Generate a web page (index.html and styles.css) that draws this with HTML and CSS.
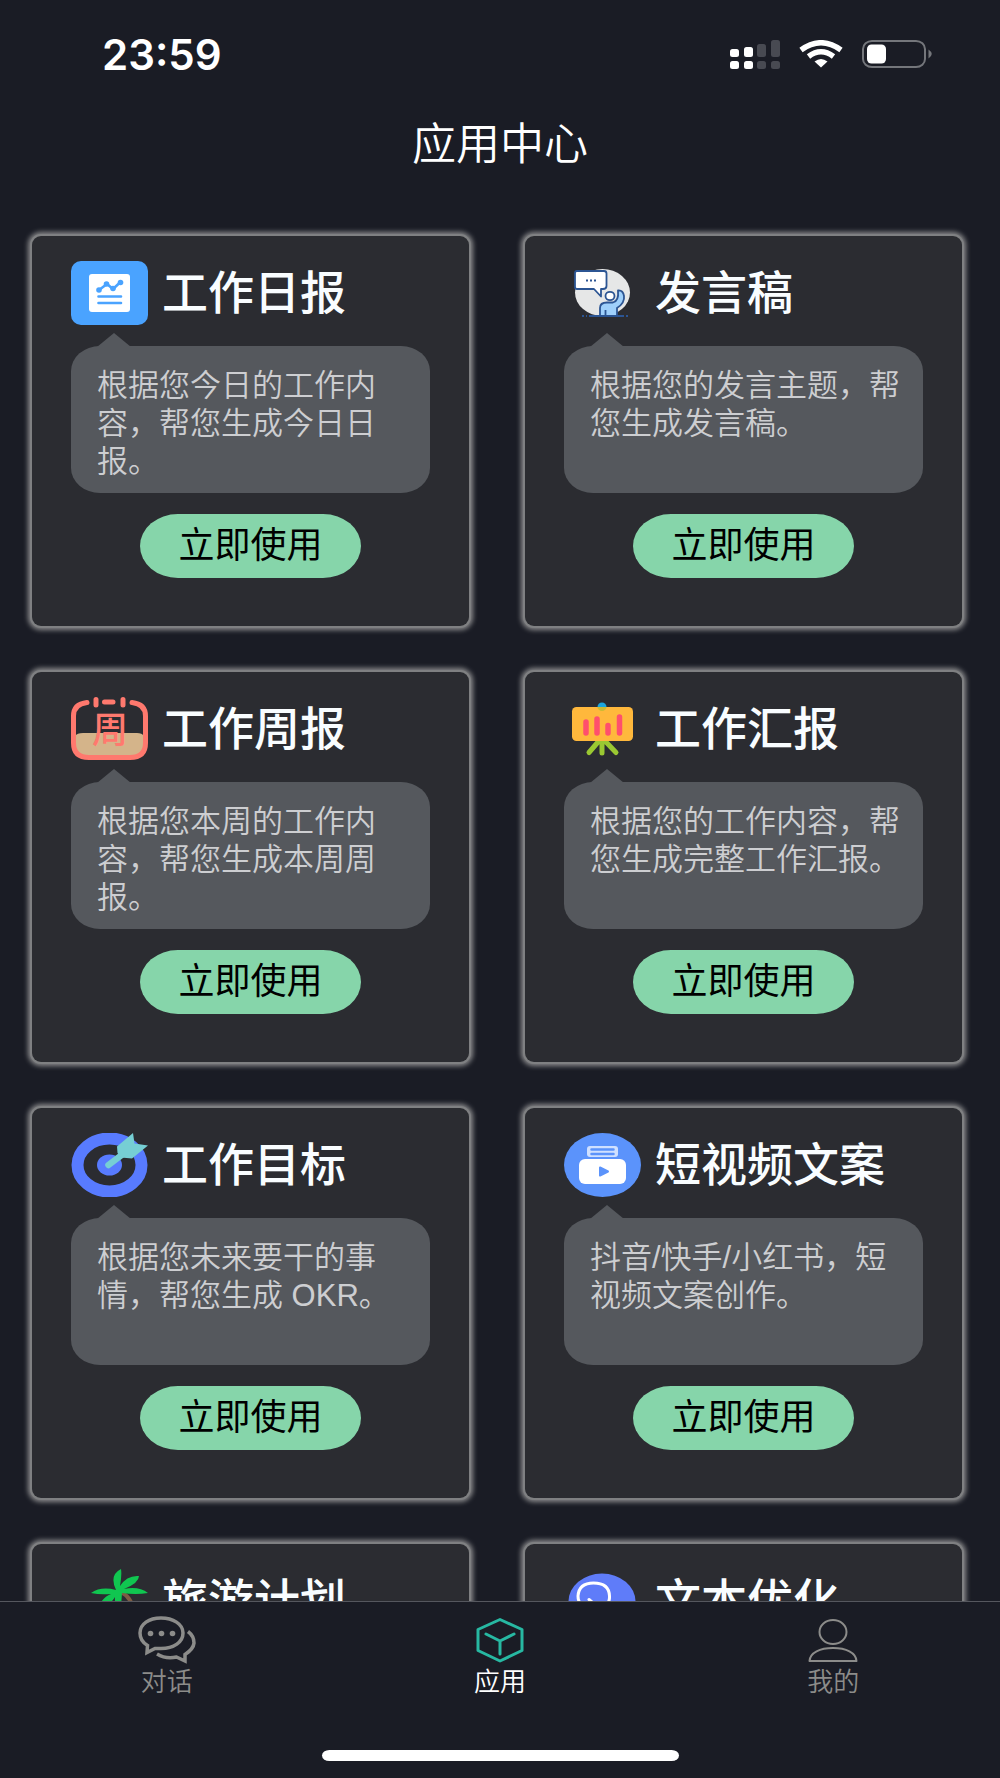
FILE: index.html
```
<!DOCTYPE html>
<html lang="zh-CN">
<head>
  <meta charset="UTF-8" />
  <meta name="viewport" content="width=device-width, initial-scale=1" />
  <title>应用中心</title>
  <link rel="stylesheet" href="styles.css">
</head>
<body>
  <div class="status-bar">
    <span class="time">23:59</span>
    <div class="status-icons">
      <svg width="50" height="29" viewBox="0 0 50 29" fill="#fff">
        <rect x="0" y="9" width="9" height="8" rx="2.5" />
        <rect x="14" y="7" width="9" height="10" rx="2.5" />
        <rect x="0" y="21" width="9" height="8" rx="2.5" />
        <rect x="14" y="21" width="9" height="8" rx="2.5" />
        <g fill="#484a52">
          <rect x="27" y="4" width="9" height="13" rx="2.5" />
          <rect x="41" y="0" width="9" height="17" rx="2.5" />
          <rect x="27" y="21" width="9" height="8" rx="2.5" />
          <rect x="41" y="21" width="9" height="8" rx="2.5" />
        </g>
      </svg>
      <svg width="44" height="28" viewBox="0 0 44 28" fill="none" stroke="#fff" stroke-width="5.5">
        <path d="M2 10 Q22 -4.5 42 10" />
        <path d="M9.500 16.500 Q22 7 34.500 16.500" />
        <path d="M15.500 21.500 Q22 16.500 28.500 21.500 L22 27.500Z" fill="#fff" stroke="none" />
      </svg>
      <svg width="70" height="28" viewBox="0 0 70 28">
        <rect x="1" y="1" width="62" height="26" rx="9" ry="8" fill="none" stroke="#74767b" stroke-width="2" />
        <rect x="5" y="4.500" width="19" height="19" rx="4.500" fill="#fff" />
        <path d="M66.500 9.500 Q73 14 66.500 18.500Z" fill="#74767b" />
      </svg>
    </div>
  </div>

  <header>
    <h1>应用中心</h1>
  </header>

  <main>
    <div class="app-list">
      <section class="card">
        <div class="card-head">
          <svg class="icon" viewBox="0 0 77 64">
            <rect width="77" height="64" rx="10" fill="#4aa3ff" />
            <rect x="18" y="13" width="41" height="38" rx="3" fill="#fff" />
            <g fill="none" stroke="#4aa3ff" stroke-width="2.600" stroke-linecap="round" stroke-linejoin="round">
              <path d="M28 29 L36 23 L42 28 L49 21.500" />
              <path d="M27.500 35.500 H50 M27.500 42 H50" />
            </g>
            <g fill="#4aa3ff">
              <circle cx="28" cy="29" r="2.800" /><circle cx="35.500" cy="23" r="2.800" />
              <circle cx="42" cy="27.500" r="2.800" /><circle cx="49.500" cy="21.500" r="2.800" />
            </g>
          </svg>
          <h2>工作日报</h2>
        </div>
        <p class="desc">根据您今日的工作内容，帮您生成今日日报。</p>
        <button type="button">立即使用</button>
      </section>

      <section class="card">
        <div class="card-head">
          <svg class="icon" viewBox="0 0 77 64">
            <ellipse cx="38.500" cy="31.500" rx="27.500" ry="23.500" fill="#e6e7e7" />
            <g stroke="#2c5593" stroke-width="1.800" stroke-linejoin="round">
              <path d="M13 10 H40 Q42.500 10 42.500 12.500 V25 Q42.500 28 39 28 H37 V35.500 L30 28 H13 Q11 28 11 26 V12 Q11 10 13 10Z" fill="#fff" />
              <ellipse cx="46" cy="35" rx="4.500" ry="4.200" fill="#fff" />
              <path d="M36 55 V47 Q36 41.500 43 41.500 H49 Q55 40 54 29.500 Q59 29 60 35 Q61 42 53 47 V55Z" fill="#9fd0fb" />
              <path d="M41.500 49 V55 M25 55 H60" />
              <path d="M18 55 h5 M62 55 h4 M22 19.500 h10" stroke-dasharray="2 2" />
            </g>
          </svg>
          <h2>发言稿</h2>
        </div>
        <p class="desc">根据您的发言主题，帮您生成发言稿。</p>
        <button type="button">立即使用</button>
      </section>

      <section class="card">
        <div class="card-head">
          <svg class="icon" viewBox="0 0 77 64">
            <path d="M4 39 Q6 36 12 36 H66 Q71 36 73 39 V47 Q73 60 60 60 H18 Q4 60 4 47Z" fill="#d4b48a" />
            <g fill="none" stroke="#ff796e" stroke-width="5" stroke-linecap="round">
              <path d="M16 5.500 Q2.500 7 2.500 19 V46 Q2.500 60.500 18 60.500 H59 Q74.500 60.500 74.500 46 V19 Q74.500 7 61 5.500" />
              <path d="M33.500 5 H42 M25 2.500 V8 M52 2.500 V8" />
            </g>
            <text class="icon-text" x="39" y="46">周</text>
          </svg>
          <h2>工作周报</h2>
        </div>
        <p class="desc">根据您本周的工作内容，帮您生成本周周报。</p>
        <button type="button">立即使用</button>
      </section>

      <section class="card">
        <div class="card-head">
          <svg class="icon" viewBox="0 0 77 64">
            <path d="M38 44 V56 M34 45 L25 55.500 M42 45 L52 55.500" stroke="#9ac832" stroke-width="5" stroke-linecap="round" />
            <circle cx="38" cy="10" r="4.500" fill="#1ca6dd" />
            <rect x="8" y="10" width="61" height="34" rx="4.500" fill="#ffb83c" />
            <path d="M33.500 10 A4.500 4 0 0 0 42.500 10Z" fill="#c9bb35" />
            <path d="M22 25 V36 M33 22 V36 M44 28.500 V36 M55.500 20 V36" stroke="#ff4f6d" stroke-width="5.500" stroke-linecap="round" />
          </svg>
          <h2>工作汇报</h2>
        </div>
        <p class="desc">根据您的工作内容，帮您生成完整工作汇报。</p>
        <button type="button">立即使用</button>
      </section>

      <section class="card">
        <div class="card-head">
          <svg class="icon" viewBox="0 0 77 64">
            <ellipse cx="38.500" cy="32" rx="32" ry="26.500" fill="none" stroke="#587bff" stroke-width="12" />
            <ellipse cx="38.500" cy="32" rx="12.500" ry="10.500" fill="#587bff" />
            <path d="M37.500 32 L52 21" stroke="#76cfd4" stroke-width="6.500" stroke-linecap="round" />
            <path d="M46 13.500 L62 0 L63.500 10.500 L77 12.500 L61 25.500 L50 24.500 L46.500 20Z" fill="#76cfd4" />
          </svg>
          <h2>工作目标</h2>
        </div>
        <p class="desc">根据您未来要干的事情，帮您生成 OKR。</p>
        <button type="button">立即使用</button>
      </section>

      <section class="card">
        <div class="card-head">
          <svg class="icon" viewBox="0 0 77 64">
            <ellipse cx="38.500" cy="32" rx="38.500" ry="32" fill="#5b93fb" />
            <rect x="23" y="13" width="31" height="11" rx="3" fill="#cfe0ff" />
            <path d="M27.500 16.500 H49.500 M27.500 21 H49.500" stroke="#5b93fb" stroke-width="2.500" stroke-linecap="round" />
            <rect x="15" y="26" width="47" height="25" rx="6" fill="#fff" />
            <path d="M36 34.500 L44 38.500 L36 42.500Z" fill="#5b93fb" stroke="#5b93fb" stroke-width="2" stroke-linejoin="round" />
          </svg>
          <h2>短视频文案</h2>
        </div>
        <p class="desc">抖音/快手/小红书，短视频文案创作。</p>
        <button type="button">立即使用</button>
      </section>

      <section class="card">
        <div class="card-head">
          <svg class="icon" viewBox="0 0 77 64">
            <path d="M50 23 Q60 28 62 40 L62 62" fill="none" stroke="#7d5c44" stroke-width="4" />
            <path d="M45 21 Q38 6 50 0 Q51 6 49 17 Q56 6 68 7 Q68 14 53 20 Q68 17 77 24 Q65 26 51 24 L50 38 Q43 37 44 28 Q38 38 28 37 Q32 28 40 25 Q29 26 20 24 Q30 17 45 21Z" fill="#10c650" />
          </svg>
          <h2>旅游计划</h2>
        </div>
      </section>

      <section class="card">
        <div class="card-head">
          <svg class="icon" viewBox="0 0 77 64">
            <ellipse cx="38" cy="32.500" rx="33.500" ry="28" fill="#5f7cf9" />
            <path d="M20 38 Q14 34 14 27 Q15 14 29.500 14 Q45 14 45.500 27 Q46 34 40 38" fill="none" stroke="#fff" stroke-width="3" />
            <path d="M25 30.500 L35 39" stroke="#fff" stroke-width="3" stroke-linecap="round" />
          </svg>
          <h2>文本优化</h2>
        </div>
      </section>
    </div>
  </main>

  <footer>
    <nav class="tabs">
      <a href="#chat">
        <svg width="58" height="48" viewBox="0 0 58 48" fill="none" stroke="#8c8c8a" stroke-width="3.500">
          <path d="M9.500 29.500 Q2 25 2 17 C2 8 11 2 23 2 S45 8 45 17 S36 32.500 23 32.500 Q20 32.500 17 32.500 L9 36.500Z" />
          <path d="M50 15.500 Q56 20 56 27 Q55.500 33 47 38.500 V45 L38.500 41 Q28 43.500 19 38" />
          <g fill="#8c8c8a" stroke="none">
            <circle cx="12.500" cy="17.500" r="2.800" /><circle cx="23.500" cy="17.500" r="2.800" /><circle cx="34.500" cy="17.500" r="2.800" />
          </g>
        </svg>
        <span>对话</span>
      </a>
      <a href="#apps" class="active">
        <svg width="58" height="48" viewBox="0 0 58 48" fill="none" stroke="#27b8a2" stroke-width="3" stroke-linecap="round" stroke-linejoin="round">
          <path d="M29 3.500 L51 13.500 V34.500 L29 45 L7 34.500 V13.500Z" />
          <path d="M15 18 L29 25 L43 18 M29 25 V38" />
        </svg>
        <span>应用</span>
      </a>
      <a href="#mine">
        <svg width="58" height="48" viewBox="0 0 58 48" fill="none" stroke="#8c8c8a" stroke-width="2" stroke-linejoin="round">
          <ellipse cx="29" cy="16" rx="13.500" ry="12" />
          <path d="M5.500 45 C6 36.500 16 32 29 32 S52 36.500 52.500 45Z" />
        </svg>
        <span>我的</span>
      </a>
    </nav>
    <div class="home-bar"></div>
  </footer>
</body>
</html>
```
FILE: styles.css
```
* {
  box-sizing: border-box;
}

body {
  margin: 0;
  height: 100vh;
  display: flex;
  flex-direction: column;
  background: #1a1c25;
  color: #fff;
  font-family: 'Liberation Sans', 'Noto Sans CJK SC', sans-serif;
}

.status-bar {
  display: flex;
  justify-content: space-between;
  align-items: center;
  height: 108px;
  padding: 0 68px 0 102px;
}

.time {
  font-family: Inter, sans-serif;
  font-size: 42px;
  font-weight: 600;
}

.status-icons {
  display: flex;
  align-items: center;
  gap: 19px;
}

header {
  text-align: center;
  height: 74px;
}

header h1 {
  margin: 0;
  font-size: 44px;
  font-weight: 350;
  line-height: 74px;
}

main {
  flex: 1;
  min-height: 0;
  overflow-y: auto;
  scrollbar-width: none;
}

.app-list {
  display: grid;
  grid-template-columns: 1fr 1fr;
  gap: 46px 56px;
  padding: 54px 38px 0 32px;
}

.card {
  height: 390px;
  padding: 25px 39px;
  border-radius: 9px;
  background: #2b2c31;
  box-shadow: 0 0 0 2px #7f8082, 0 0 5px 4px #8a8a8c;
}

.card-head {
  display: flex;
  align-items: center;
  gap: 14px;
  height: 64px;
}

.icon {
  width: 77px;
  height: 64px;
  flex: none;
}

.icon-text {
  font-size: 36px;
  font-weight: 500;
  text-anchor: middle;
  fill: #ff796e;
}

.card h2 {
  margin: 0;
  font-size: 46px;
  font-weight: 500;
  line-height: 64px;
  white-space: nowrap;
  color: #f9fdff;
}

.desc {
  position: relative;
  height: 147px;
  margin: 21px 0;
  padding: 21px 20px 0 26px;
  border-radius: 29px / 25px;
  background: #55585d;
  color: #cdced1;
  font-size: 31px;
  font-weight: 350;
  line-height: 38px;
}

/* little tail pointing up at the icon */
.desc::before {
  content: '';
  position: absolute;
  left: 26px;
  top: -13px;
  border: 17px solid transparent;
  border-top: 0;
  border-bottom: 14px solid #55585d;
}

.card button {
  display: block;
  width: 221px;
  height: 64px;
  margin: 0 auto;
  padding: 0;
  border: none;
  border-radius: 38px / 32px;
  background: #86d5aa;
  color: #000;
  font-family: inherit;
  font-size: 36px;
  line-height: 64px;
  cursor: pointer;
}

footer {
  border-top: 1px solid #55575e;
  padding: 14px 0 17px;
}

.tabs {
  display: flex;
}

.tabs a {
  flex: 1;
  display: flex;
  flex-direction: column;
  align-items: center;
  color: #8c8c8a;
  font-size: 26px;
  font-weight: 350;
  line-height: 36px;
  text-decoration: none;
}

.tabs a.active {
  color: #fff;
}

.home-bar {
  width: 357px;
  height: 11px;
  margin: 50px auto 0;
  border-radius: 8px / 6px;
  background: #fff;
}
```
